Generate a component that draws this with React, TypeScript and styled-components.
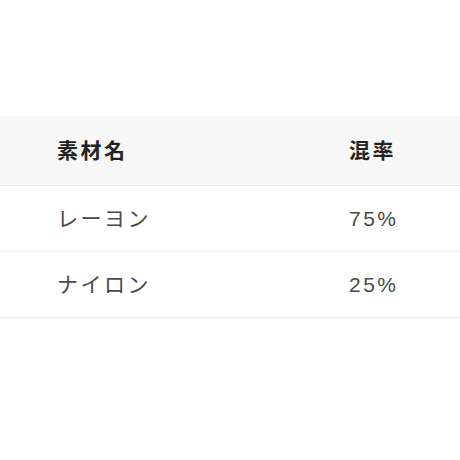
import React from 'react';
import styled, { createGlobalStyle } from 'styled-components';

const GlobalStyle = createGlobalStyle`
  html, body {
    margin: 0;
    padding: 0;
    background: #fff;
  }
  body {
    font-family: "Liberation Sans", "Noto Sans CJK JP", sans-serif;
  }
`;

const Page = styled.div`
  padding-top: 116px;
  width: 460px;
  height: 460px;
  box-sizing: border-box;
  overflow: hidden;
`;

const Table = styled.table`
  width: 100%;
  border-collapse: collapse;
  table-layout: fixed;
`;

const Row = styled.tr<{ $head?: boolean }>`
  background: ${(p) => (p.$head ? '#f7f7f7' : '#fff')};
  border-bottom: 1px solid #ebebeb;
`;

const Cell = styled.td<{ $head?: boolean; $first?: boolean }>`
  height: ${(p) => (p.$head ? '69px' : '66px')};
  padding: 0 0 0 ${(p) => (p.$first ? '57px' : '0')};
  width: ${(p) => (p.$first ? '349px' : 'auto')};
  box-sizing: border-box;
  font-size: 21px;
  letter-spacing: 2.5px;
  font-weight: ${(p) => (p.$head ? 700 : 400)};
  color: ${(p) => (p.$head ? '#222' : '#4a4a4a')};
  vertical-align: middle;
  text-align: left;
  line-height: 1;
`;

const rows = [
  { name: 'レーヨン', rate: '75%' },
  { name: 'ナイロン', rate: '25%' },
];

const App: React.FC = () => {
  return (
    <>
      <GlobalStyle />
      <Page>
        <Table>
          <tbody>
            <Row $head>
              <Cell $head $first>素材名</Cell>
              <Cell $head>混率</Cell>
            </Row>
            {rows.map((r) => (
              <Row key={r.name}>
                <Cell $first>{r.name}</Cell>
                <Cell>{r.rate}</Cell>
              </Row>
            ))}
          </tbody>
        </Table>
      </Page>
    </>
  );
};

export default App;
